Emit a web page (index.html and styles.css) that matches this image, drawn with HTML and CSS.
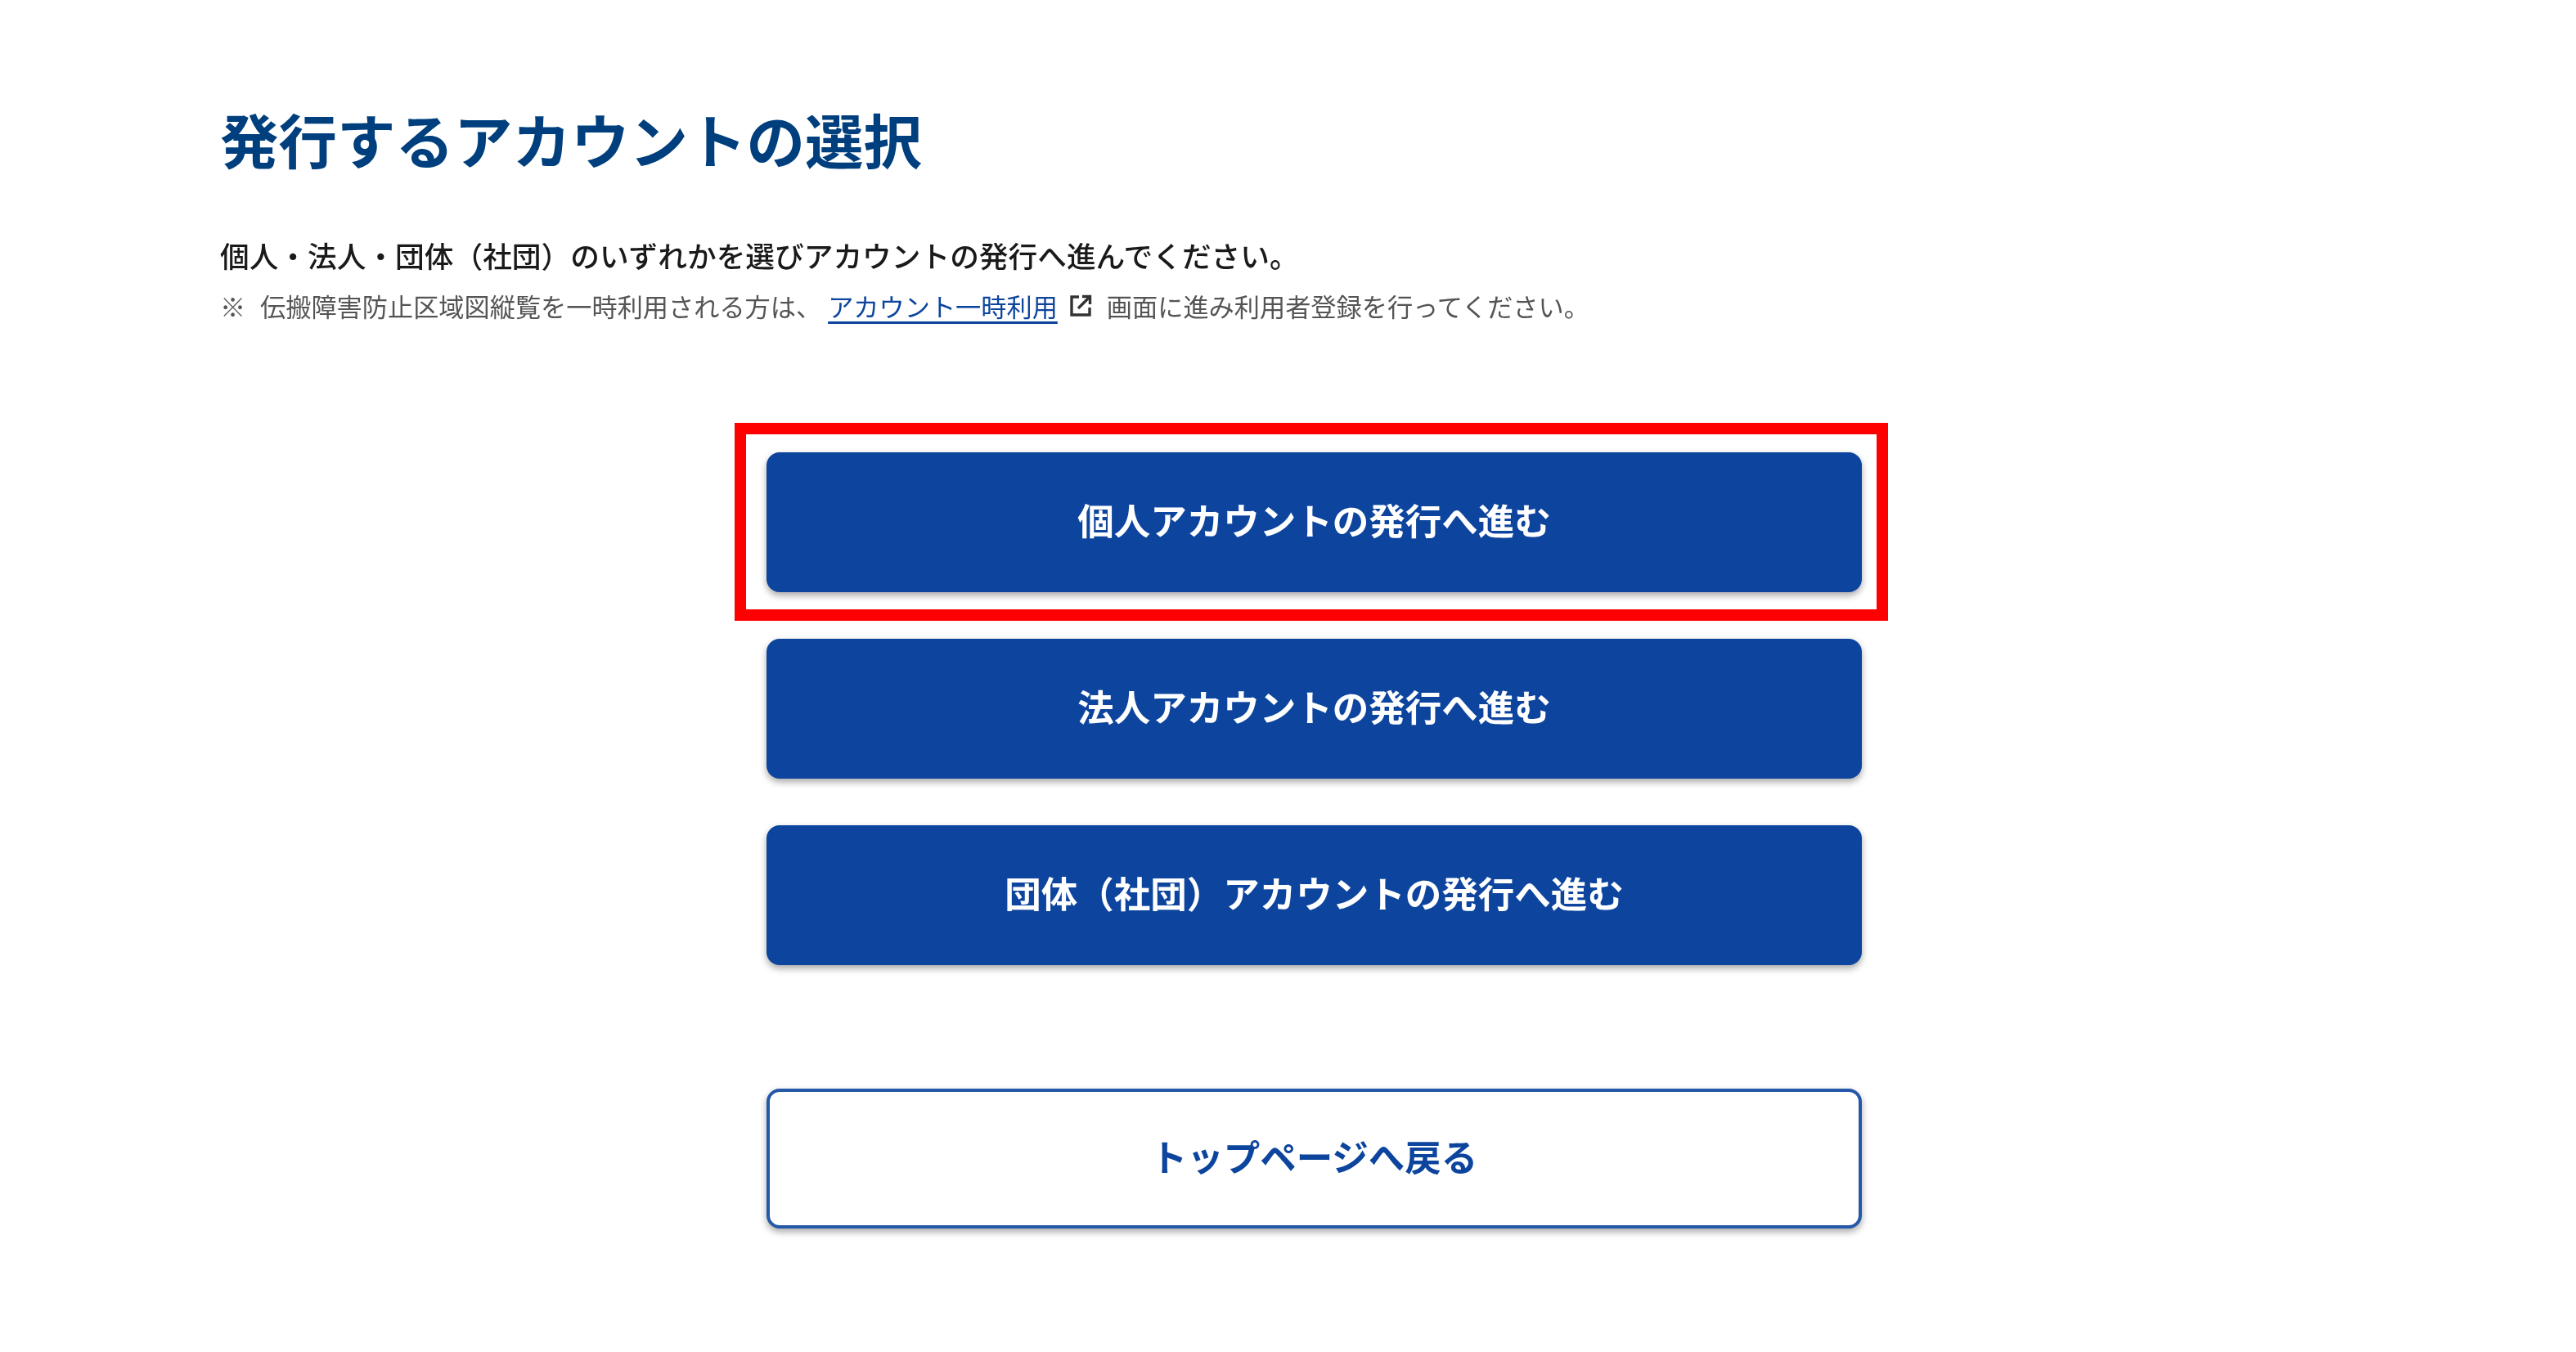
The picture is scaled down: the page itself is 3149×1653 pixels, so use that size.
FILE: index.html
```html
<!DOCTYPE html>
<html lang="ja">
<head>
    <meta charset="UTF-8">
    <meta name="viewport" content="width=device-width, initial-scale=1.0">
    <title>発行するアカウントの選択</title>
    <link rel="stylesheet" href="styles.css">
</head>
<body>
    <div class="page">
        <h1 class="page-title">発行するアカウントの選択</h1>
        <p class="lead">個人・法人・団体（社団）のいずれかを選びアカウントの発行へ進んでください。</p>
        <p class="note">
            <span class="note-mark">※</span>伝搬障害防止区域図縦覧を一時利用される方は、<a href="#" class="note-link">アカウント一時利用</a>
            <svg class="ext-icon" viewBox="0 0 30 30" fill="none" stroke="#333" stroke-width="3.4">
                <path d="M13 4H4V26H26V17"/>
                <path d="M12 18L25 5"/>
                <path d="M17 3.5H26.5V13"/>
            </svg>
            <span>画面に進み利用者登録を行ってください。</span>
        </p>
        <div class="actions">
            <div class="action-marked">
                <a href="#" class="btn btn-primary">個人アカウントの発行へ進む</a>
                <span class="red-frame"></span>
            </div>
            <a href="#" class="btn btn-primary">法人アカウントの発行へ進む</a>
            <a href="#" class="btn btn-primary">団体（社団）アカウントの発行へ進む</a>
            <a href="#" class="btn btn-outline">トップページへ戻る</a>
        </div>
    </div>
</body>
</html>
```

FILE: styles.css
```css
* {
    margin: 0;
    padding: 0;
    box-sizing: border-box;
}
body {
    background: white;
    font-family: "Noto Sans CJK JP", "Noto Sans", sans-serif;
    overflow: hidden;
}
.page {
    height: 1653px;
    padding: 121px 0 0 269px;
}
.page-title {
    font-size: 71.5px;
    line-height: 96px;
    font-weight: 700;
    color: #003f7d;
    filter: blur(0.7px);
}
.lead {
    margin-top: 70px;
    font-size: 35.7px;
    line-height: 50px;
    font-weight: 500;
    color: #1a1a1a;
    filter: blur(0.6px);
}
.note {
    display: flex;
    align-items: center;
    margin-top: 12px;
    font-size: 31.2px;
    line-height: 50px;
    color: #555;
    filter: blur(0.6px);
}
.note-mark {
    width: 49px;
}
.note-link {
    margin-left: 8px;
    color: #0d459e;
    text-decoration: underline;
    text-underline-offset: 6px;
    text-decoration-thickness: 3px;
}
.ext-icon {
    width: 30px;
    height: 30px;
    margin: 0 17px 0 13px;
}
.actions {
    display: flex;
    flex-direction: column;
    gap: 57px;
    width: 1339px;
    margin: 154px 0 0 668px;
}
.action-marked {
    position: relative;
}
.red-frame {
    position: absolute;
    left: -39px;
    right: -32px;
    top: -36px;
    bottom: -35px;
    border: 14px solid #ff0000;
}
.btn {
    display: flex;
    align-items: center;
    justify-content: center;
    height: 171px;
    padding-bottom: 9px;
    border-radius: 16px;
    font-size: 44.5px;
    font-weight: 700;
    text-decoration: none;
    box-shadow: 0 4px 8px rgba(0, 0, 0, 0.35);
    filter: blur(0.6px);
}
.btn-primary {
    background: #0d459e;
    color: white;
}
.btn-outline {
    margin-top: 94px;
    background: white;
    color: #0d459e;
    border: 4px solid #2458a8;
}
```
